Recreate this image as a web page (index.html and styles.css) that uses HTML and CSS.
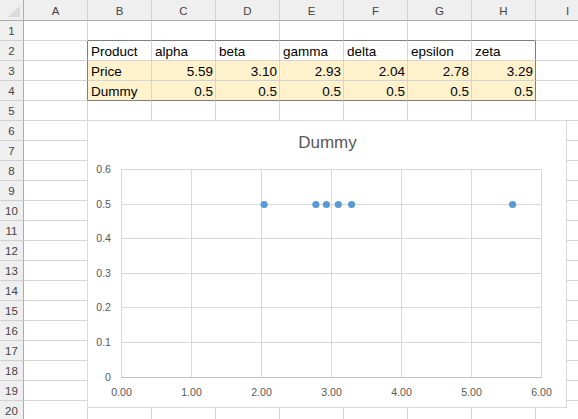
FILE: index.html
```html
<!DOCTYPE html>
<html>
<head>
<meta charset="utf-8">
<link rel="stylesheet" href="styles.css">
</head>
<body>
<div class="wrap">
  <div class="sheet">
    <div class="corner"><svg class="tri" width="12" height="11" viewBox="0 0 12 11"><polygon points="12,0 12,11 0,11" fill="#dadada"/></svg></div>
    <div class="ch">A</div><div class="ch">B</div><div class="ch">C</div><div class="ch">D</div><div class="ch">E</div><div class="ch">F</div><div class="ch">G</div><div class="ch">H</div><div class="ch">I</div>

    <div class="rh">1</div>
    <div class="c"></div><div class="c tb"></div><div class="c tb"></div><div class="c tb"></div><div class="c tb"></div><div class="c tb"></div><div class="c tb"></div><div class="c tb"></div><div class="c"></div>

    <div class="rh">2</div>
    <div class="c tr"></div><div class="c">Product</div><div class="c">alpha</div><div class="c">beta</div><div class="c">gamma</div><div class="c">delta</div><div class="c">epsilon</div><div class="c tr">zeta</div><div class="c"></div>

    <div class="rh">3</div>
    <div class="c tr"></div><div class="c fill">Price</div><div class="c fill num">5.59</div><div class="c fill num">3.10</div><div class="c fill num">2.93</div><div class="c fill num">2.04</div><div class="c fill num">2.78</div><div class="c fill num tr">3.29</div><div class="c"></div>

    <div class="rh">4</div>
    <div class="c tr"></div><div class="c fill tb">Dummy</div><div class="c fill num tb">0.5</div><div class="c fill num tb">0.5</div><div class="c fill num tb">0.5</div><div class="c fill num tb">0.5</div><div class="c fill num tb">0.5</div><div class="c fill num tb tr">0.5</div><div class="c"></div>

    <div class="rh">5</div><div class="c"></div><div class="c"></div><div class="c"></div><div class="c"></div><div class="c"></div><div class="c"></div><div class="c"></div><div class="c"></div><div class="c"></div>
    <div class="rh">6</div><div class="c"></div><div class="c"></div><div class="c"></div><div class="c"></div><div class="c"></div><div class="c"></div><div class="c"></div><div class="c"></div><div class="c"></div>
    <div class="rh">7</div><div class="c"></div><div class="c"></div><div class="c"></div><div class="c"></div><div class="c"></div><div class="c"></div><div class="c"></div><div class="c"></div><div class="c"></div>
    <div class="rh">8</div><div class="c"></div><div class="c"></div><div class="c"></div><div class="c"></div><div class="c"></div><div class="c"></div><div class="c"></div><div class="c"></div><div class="c"></div>
    <div class="rh">9</div><div class="c"></div><div class="c"></div><div class="c"></div><div class="c"></div><div class="c"></div><div class="c"></div><div class="c"></div><div class="c"></div><div class="c"></div>
    <div class="rh">10</div><div class="c"></div><div class="c"></div><div class="c"></div><div class="c"></div><div class="c"></div><div class="c"></div><div class="c"></div><div class="c"></div><div class="c"></div>
    <div class="rh">11</div><div class="c"></div><div class="c"></div><div class="c"></div><div class="c"></div><div class="c"></div><div class="c"></div><div class="c"></div><div class="c"></div><div class="c"></div>
    <div class="rh">12</div><div class="c"></div><div class="c"></div><div class="c"></div><div class="c"></div><div class="c"></div><div class="c"></div><div class="c"></div><div class="c"></div><div class="c"></div>
    <div class="rh">13</div><div class="c"></div><div class="c"></div><div class="c"></div><div class="c"></div><div class="c"></div><div class="c"></div><div class="c"></div><div class="c"></div><div class="c"></div>
    <div class="rh">14</div><div class="c"></div><div class="c"></div><div class="c"></div><div class="c"></div><div class="c"></div><div class="c"></div><div class="c"></div><div class="c"></div><div class="c"></div>
    <div class="rh">15</div><div class="c"></div><div class="c"></div><div class="c"></div><div class="c"></div><div class="c"></div><div class="c"></div><div class="c"></div><div class="c"></div><div class="c"></div>
    <div class="rh">16</div><div class="c"></div><div class="c"></div><div class="c"></div><div class="c"></div><div class="c"></div><div class="c"></div><div class="c"></div><div class="c"></div><div class="c"></div>
    <div class="rh">17</div><div class="c"></div><div class="c"></div><div class="c"></div><div class="c"></div><div class="c"></div><div class="c"></div><div class="c"></div><div class="c"></div><div class="c"></div>
    <div class="rh">18</div><div class="c"></div><div class="c"></div><div class="c"></div><div class="c"></div><div class="c"></div><div class="c"></div><div class="c"></div><div class="c"></div><div class="c"></div>
    <div class="rh">19</div><div class="c"></div><div class="c"></div><div class="c"></div><div class="c"></div><div class="c"></div><div class="c"></div><div class="c"></div><div class="c"></div><div class="c"></div>
    <div class="rh">20</div><div class="c"></div><div class="c"></div><div class="c"></div><div class="c"></div><div class="c"></div><div class="c"></div><div class="c"></div><div class="c"></div><div class="c"></div>
  </div>

  <div class="chart">
    <svg class="plot" width="478" height="286" viewBox="0 0 478 286">
      <text class="title" x="239.5" y="27" text-anchor="middle">Dummy</text>
      <g class="grid">
        <line x1="33.5" y1="48.5" x2="453.5" y2="48.5"/>
        <line x1="33.5" y1="83.5" x2="453.5" y2="83.5"/>
        <line x1="33.5" y1="117.5" x2="453.5" y2="117.5"/>
        <line x1="33.5" y1="152.5" x2="453.5" y2="152.5"/>
        <line x1="33.5" y1="186.5" x2="453.5" y2="186.5"/>
        <line x1="33.5" y1="221.5" x2="453.5" y2="221.5"/>
        <line x1="33.5" y1="48.5" x2="33.5" y2="256"/>
        <line x1="103.5" y1="48.5" x2="103.5" y2="256"/>
        <line x1="173.5" y1="48.5" x2="173.5" y2="256"/>
        <line x1="243.5" y1="48.5" x2="243.5" y2="256"/>
        <line x1="313.5" y1="48.5" x2="313.5" y2="256"/>
        <line x1="383.5" y1="48.5" x2="383.5" y2="256"/>
        <line x1="453.5" y1="48.5" x2="453.5" y2="256"/>
      </g>
      <line class="axis" x1="33" y1="256.5" x2="454" y2="256.5"/>
      <g class="lbl">
        <text x="23" y="52" text-anchor="end">0.6</text>
        <text x="23" y="87" text-anchor="end">0.5</text>
        <text x="23" y="121" text-anchor="end">0.4</text>
        <text x="23" y="156" text-anchor="end">0.3</text>
        <text x="23" y="190" text-anchor="end">0.2</text>
        <text x="23" y="225" text-anchor="end">0.1</text>
        <text x="23" y="260" text-anchor="end">0</text>
        <text x="33.5" y="275" text-anchor="middle">0.00</text>
        <text x="103.5" y="275" text-anchor="middle">1.00</text>
        <text x="173.5" y="275" text-anchor="middle">2.00</text>
        <text x="243.5" y="275" text-anchor="middle">3.00</text>
        <text x="313.5" y="275" text-anchor="middle">4.00</text>
        <text x="383.5" y="275" text-anchor="middle">5.00</text>
        <text x="453.5" y="275" text-anchor="middle">6.00</text>
      </g>
      <g class="pts">
        <circle cx="424.6" cy="83.5" r="3.6"/>
        <circle cx="250.3" cy="83.5" r="3.6"/>
        <circle cx="238.4" cy="83.5" r="3.6"/>
        <circle cx="176.1" cy="83.5" r="3.6"/>
        <circle cx="227.9" cy="83.5" r="3.6"/>
        <circle cx="263.6" cy="83.5" r="3.6"/>
      </g>
    </svg>
  </div>
</div>
</body>
</html>
```

FILE: styles.css
```css
html, body {
  margin: 0;
  padding: 0;
  background: #ffffff;
  overflow: hidden;
}
.wrap {
  position: relative;
  width: 578px;
  height: 419px;
  overflow: hidden;
  font-family: "Liberation Sans", Arial, sans-serif;
}
.sheet {
  display: grid;
  grid-template-columns: 24px repeat(9, 64px);
  grid-template-rows: 21px repeat(20, 20px);
}
.sheet > div {
  box-sizing: border-box;
  border-right: 1px solid #d4d4d4;
  border-bottom: 1px solid #d4d4d4;
  overflow: hidden;
  white-space: nowrap;
}
.corner {
  background: #efefef;
  display: flex;
  align-items: flex-end;
  justify-content: flex-end;
  padding: 0 3px 3px 0;
  border-right-color: #ababab !important;
  border-bottom-color: #ababab !important;
}
.tri { display: block; }
.ch {
  background: #efefef;
  color: #444444;
  font-size: 11.5px;
  text-align: center;
  line-height: 20px;
  padding-top: 1px;
  border-bottom-color: #ababab !important;
  border-right-color: #d0d0d0 !important;
}
.rh {
  background: #efefef;
  color: #444444;
  font-size: 11.5px;
  text-align: center;
  line-height: 19px;
  padding-top: 1px;
  border-right-color: #ababab !important;
  border-bottom-color: #d0d0d0 !important;
}
.c {
  color: #000000;
  font-size: 13.5px;
  line-height: 17px;
  padding: 2px 3px 0 3px;
}
.num {
  text-align: right;
  padding-right: 2px;
}
.fill { background: #fff2cc; }
.sheet > .tb { border-bottom-color: #7f7f7f; }
.sheet > .tr { border-right-color: #7f7f7f; }

.chart {
  position: absolute;
  left: 87px;
  top: 120px;
  width: 480px;
  height: 288px;
  box-sizing: border-box;
  border: 1px solid #d9d9d9;
  background: #ffffff;
}
.plot { display: block; }
.title {
  font-family: "Liberation Sans", Arial, sans-serif;
  font-size: 17px;
  fill: #595959;
}
.grid line {
  stroke: #d9d9d9;
  stroke-width: 1;
}
.axis {
  stroke: #bfbfbf;
  stroke-width: 1;
}
.lbl text {
  font-family: "Liberation Sans", Arial, sans-serif;
  font-size: 10.6px;
  fill: #595959;
}
.pts circle { fill: #5b9bd5; }
```
